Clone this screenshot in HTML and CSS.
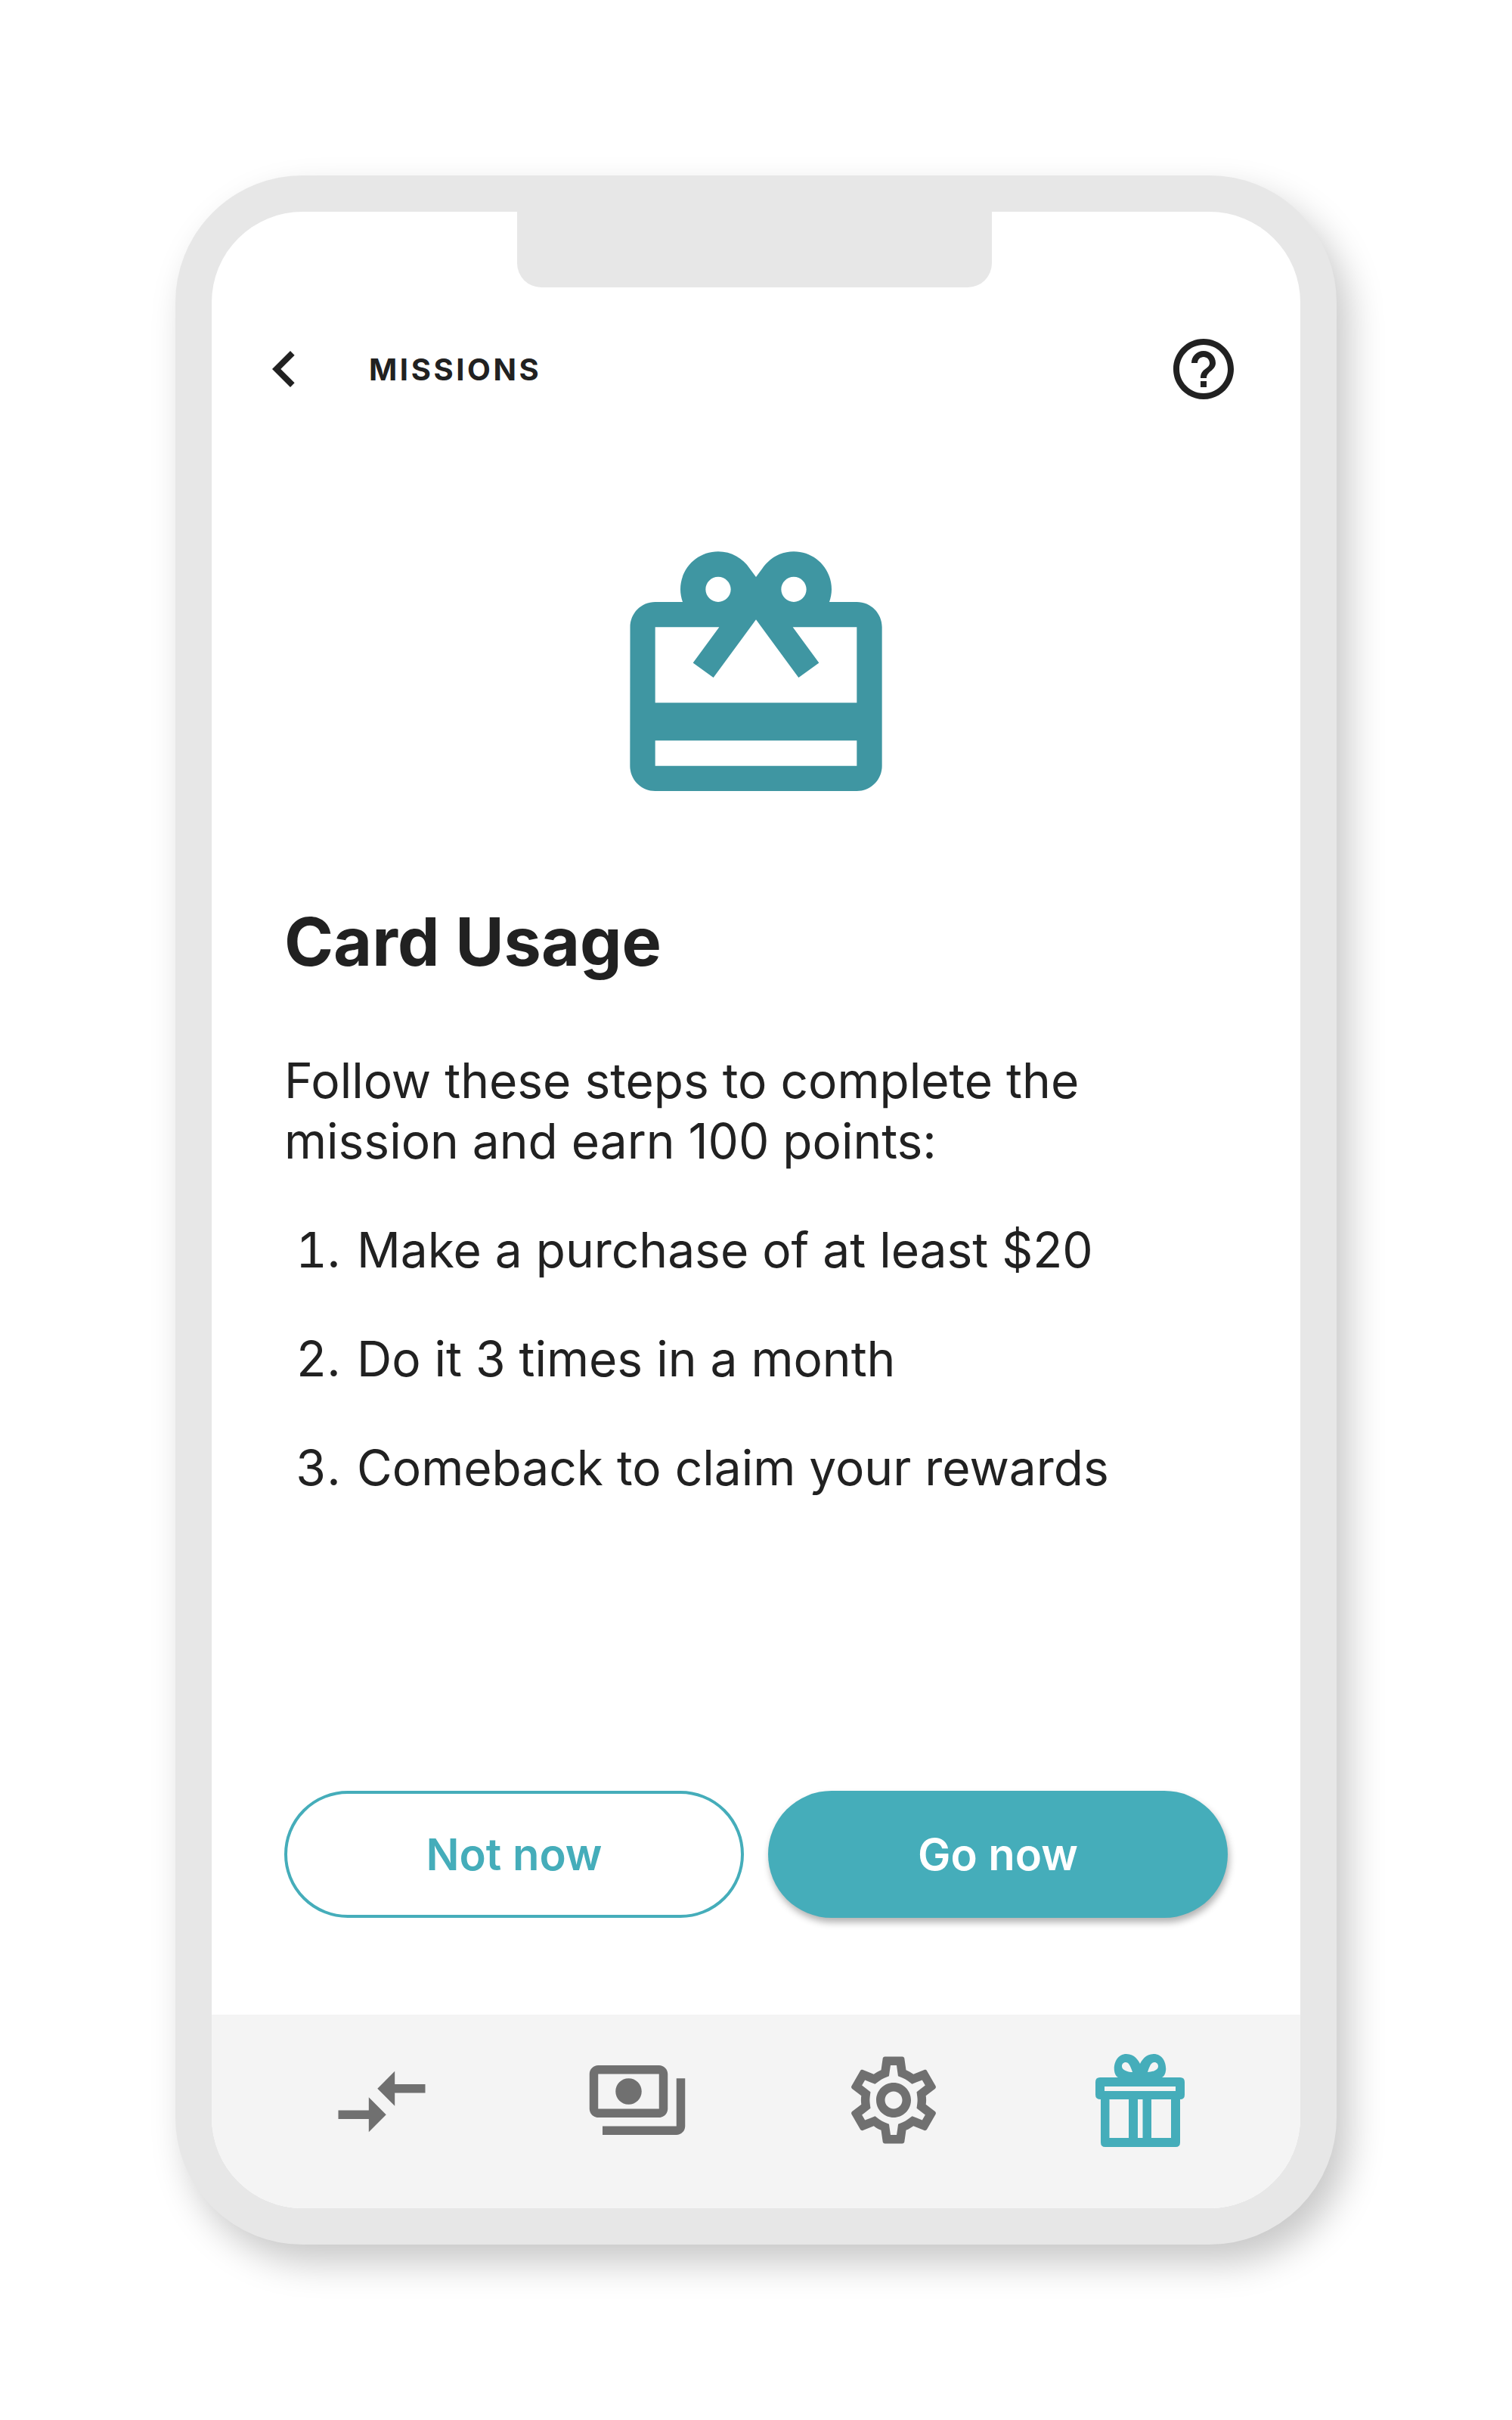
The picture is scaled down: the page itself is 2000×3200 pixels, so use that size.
FILE: index.html
```html
<!DOCTYPE html>
<html>
<head>
    <title>Missions</title>
    <link rel="stylesheet" href="styles.css">
</head>
<body>
    <div class="phone">
        <div class="notch"></div>
        <div class="screen">
            <div class="header">
                <svg class="header-icon" viewBox="0 0 24 24"><path d="M15.41 7.41L14 6l-6 6 6 6 1.41-1.41L10.83 12z"/></svg>
                <div class="header-title">MISSIONS</div>
                <svg class="header-icon help" viewBox="0 0 24 24"><path d="M11 18h2v-2h-2v2zm1-16C6.48 2 2 6.48 2 12s4.48 10 10 10 10-4.48 10-10S17.52 2 12 2zm0 18c-4.41 0-8-3.59-8-8s3.59-8 8-8 8 3.59 8 8-3.59 8-8 8zm0-14c-2.21 0-4 1.79-4 4h2c0-1.1.9-2 2-2s2 .9 2 2c0 2-3 1.75-3 5h2c0-2.25 3-2.5 3-5 0-2.21-1.79-4-4-4z"/></svg>
            </div>

            <svg class="hero-icon" viewBox="0 0 24 24"><path d="M20 6h-2.18c.11-.31.18-.65.18-1 0-1.66-1.34-3-3-3-1.05 0-1.96.54-2.5 1.35l-.5.67-.5-.68C10.96 2.54 10.05 2 9 2 7.34 2 6 3.34 6 5c0 .35.07.69.18 1H4c-1.11 0-1.99.89-1.99 2L2 19c0 1.11.89 2 2 2h16c1.11 0 2-.89 2-2V8c0-1.11-.89-2-2-2zm-5-2c.55 0 1 .45 1 1s-.45 1-1 1-1-.45-1-1 .45-1 1-1zM9 4c.55 0 1 .45 1 1s-.45 1-1 1-1-.45-1-1 .45-1 1-1zm11 15H4v-2h16v2zm0-5H4V8h5.08L7 10.83 8.62 12 11 8.76l1-1.36 1 1.36L15.38 12 17 10.83 14.92 8H20v6z"/></svg>

            <div class="content">
                <h1>Card Usage</h1>
                <p>Follow these steps to complete the mission and earn 100 points:</p>
                <ol>
                    <li>Make a purchase of at least $20</li>
                    <li>Do it 3 times in a month</li>
                    <li>Comeback to claim your rewards</li>
                </ol>
            </div>

            <div class="actions">
                <button class="btn btn-outline">Not now</button>
                <button class="btn btn-solid">Go now</button>
            </div>

            <div class="nav">
                <svg class="nav-icon nav-compare" viewBox="0 0 24 24"><path d="M9.01 14H2v2h7.01v3L13 15l-3.99-4v3zm5.98-1v-3H22V8h-7.01V5L11 9l3.99 4z"/></svg>
                <svg class="nav-icon nav-money" viewBox="0 0 24 24"><path d="M19 14V6c0-1.1-.9-2-2-2H3c-1.1 0-2 .9-2 2v8c0 1.1.9 2 2 2h14c1.1 0 2-.9 2-2zm-2 0H3V6h14v8zm-7-7c-1.66 0-3 1.34-3 3s1.34 3 3 3 3-1.34 3-3-1.34-3-3-3zm13 0v11c0 1.1-.9 2-2 2H4v-2h17V7h2z"/></svg>
                <svg class="nav-icon nav-gear" viewBox="0 0 24 24"><path d="M19.43 12.98c.04-.32.07-.64.07-.98 0-.34-.03-.66-.07-.98l2.11-1.65c.19-.15.24-.42.12-.64l-2-3.46c-.09-.16-.26-.25-.44-.25-.06 0-.12.01-.17.03l-2.49 1c-.52-.4-1.08-.73-1.69-.98l-.38-2.65C14.46 2.18 14.25 2 14 2h-4c-.25 0-.46.18-.49.42l-.38 2.65c-.61.25-1.17.59-1.69.98l-2.49-1c-.06-.02-.12-.03-.18-.03-.17 0-.34.09-.43.25l-2 3.46c-.13.22-.07.49.12.64l2.11 1.65c-.04.32-.07.65-.07.98 0 .33.03.66.07.98l-2.11 1.65c-.19.15-.24.42-.12.64l2 3.46c.09.16.26.25.44.25.06 0 .12-.01.17-.03l2.49-1c.52.4 1.08.73 1.69.98l.38 2.65c.03.24.24.42.49.42h4c.25 0 .46-.18.49-.42l.38-2.65c.61-.25 1.17-.59 1.69-.98l2.49 1c.06.02.12.03.18.03.17 0 .34-.09.43-.25l2-3.46c.12-.22.07-.49-.12-.64l-2.11-1.65zm-1.98-1.71c.04.31.05.52.05.73 0 .21-.02.43-.05.73l-.14 1.13.89.7 1.08.84-.7 1.21-1.27-.51-1.04-.42-.9.68c-.43.32-.84.56-1.25.73l-1.06.43-.16 1.13-.2 1.35h-1.4l-.19-1.35-.16-1.13-1.06-.43c-.43-.18-.83-.41-1.23-.71l-.91-.7-1.06.43-1.27.51-.7-1.21 1.08-.84.89-.7-.14-1.13c-.03-.31-.05-.54-.05-.74s.02-.43.05-.73l.14-1.13-.89-.7-1.08-.84.7-1.21 1.27.51 1.04.42.9-.68c.43-.32.84-.56 1.25-.73l1.06-.43.16-1.13.2-1.35h1.39l.19 1.35.16 1.13 1.06.43c.43.18.83.41 1.23.71l.91.7 1.06-.43 1.27-.51.7 1.21-1.07.85-.89.7.14 1.13zM12 8c-2.21 0-4 1.79-4 4s1.79 4 4 4 4-1.79 4-4-1.79-4-4-4zm0 6c-1.1 0-2-.9-2-2s.9-2 2-2 2 .9 2 2-.9 2-2 2z"/></svg>
                <svg class="nav-gift" viewBox="0 0 118 123">
                    <path fill-rule="evenodd" d="M30 31C21 27 23 0 41 0 52 0 57 9 59 13 61 9 66 0 77 0 95 0 97 27 88 31H112Q118 31 118 37V54Q118 60 112 60V117Q112 123 106 123H13Q7 123 7 117V60Q0 60 0 54V37Q0 31 6 31ZM49 24C46 15 44 11 40 11 36 11 34 15 35.5 18.5 37 22 44 24 49 24ZM69 24C72 15 74 11 78 11 82 11 84 15 82.5 18.5 81 22 74 24 69 24ZM12 43V49H106V43ZM18.500 60V111H44V60ZM56 60V111H62.500V60ZM74 60V111H100V60Z"/>
                </svg>
            </div>
        </div>
    </div>
</body>
</html>
```

FILE: styles.css
```css
body {
    margin: 0;
    padding: 232px;
    background-color: #fff;
    font-family: Inter, sans-serif;
    color: #212121;
}

.phone {
    position: relative;
    width: 1536px;
    height: 2736px;
    box-sizing: border-box;
    border: 48px solid #e7e7e7;
    border-radius: 168px;
    background-color: #e7e7e7;
    box-shadow: 16px 24px 48px rgba(0, 0, 0, 0.22);
}

.notch {
    position: absolute;
    top: 0;
    left: 404px;
    width: 628px;
    height: 100px;
    background-color: #e7e7e7;
    border-radius: 0 0 32px 32px;
}

.screen {
    display: flex;
    flex-direction: column;
    height: 100%;
    border-radius: 120px;
    overflow: hidden;
    background-color: #fff;
}

.header {
    display: flex;
    align-items: center;
    padding: 160px 80px 0 48px;
}

.header-icon {
    width: 96px;
    height: 96px;
    fill: #212121;
}

.help {
    margin-left: auto;
}

.header-title {
    margin-left: 64px;
    font-size: 40px;
    font-weight: 700;
    letter-spacing: 0.09em;
}

.hero-icon {
    display: block;
    width: 400px;
    height: 400px;
    margin: 160px auto 0;
    fill: #3f96a2;
}

.content {
    padding: 0 96px;
}

h1 {
    margin: 93px 0 0;
    font-size: 88px;
    line-height: 112px;
    font-weight: 700;
}

p {
    margin: 88px 0 0;
    font-size: 64px;
    line-height: 80px;
}

ol {
    margin: 64px 0 0;
    padding: 0;
    list-style: none;
    counter-reset: step;
    font-size: 64px;
    line-height: 80px;
}

li {
    display: flex;
    gap: 22px;
    margin-bottom: 64px;
    counter-increment: step;
}

li::before {
    content: counter(step) ".";
    width: 74px;
    text-align: right;
    font-variant-numeric: tabular-nums;
}

.actions {
    display: grid;
    grid-template-columns: 1fr 1fr;
    gap: 32px;
    margin-top: auto;
    padding: 0 96px 128px;
}

.btn {
    height: 168px;
    box-sizing: border-box;
    border-radius: 84px;
    font-family: Inter, sans-serif;
    font-size: 58px;
    font-weight: 600;
}

.btn-outline {
    border: 4px solid #45adba;
    background-color: #fff;
    color: #45adba;
}

.btn-solid {
    border: none;
    background-color: #45adba;
    color: #fff;
    box-shadow: 2px 6px 10px rgba(0, 0, 0, 0.3);
}

.nav {
    position: relative;
    height: 256px;
    background-color: #f4f4f4;
}

.nav-icon {
    position: absolute;
    top: 46px;
    width: 138px;
    height: 138px;
    fill: #707070;
}

.nav-compare {
    left: 156px;
}

.nav-money {
    left: 494px;
    top: 44px;
}

.nav-gear {
    left: 833px;
    top: 44px;
}

.nav-gift {
    position: absolute;
    left: 1169px;
    top: 52px;
    width: 118px;
    height: 123px;
    fill: #45adba;
}
```
